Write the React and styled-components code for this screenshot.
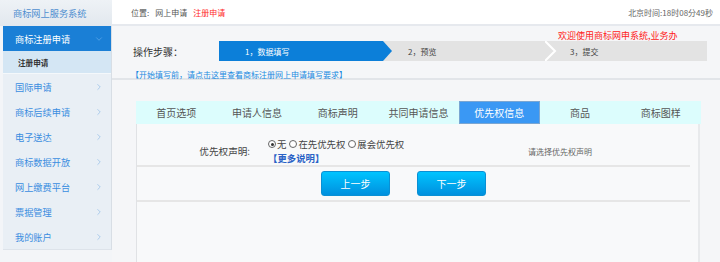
import styled, { createGlobalStyle } from "styled-components";
import { ChevronRight, ChevronDown } from "lucide-react";

const GlobalStyle = createGlobalStyle`
  html, body {
    margin: 0;
    padding: 0;
  }
  body {
    font-family: "Noto Sans CJK SC", "Noto Sans", sans-serif;
    background: #f5f6f8;
  }
`;

const Page = styled.div`
  display: flex;
  width: 720px;
  height: 262px;
  overflow: hidden;
`;

const Sidebar = styled.aside`
  width: 112px;
  flex-shrink: 0;
  display: flex;
  flex-direction: column;
  background: #f3f5f8;
`;

const Brand = styled.div`
  height: 26px;
  display: flex;
  align-items: center;
  padding-left: 13px;
  font-size: 9.2px;
  color: #4f8fd0;
  background: linear-gradient(#eef2f6, #e2e8ee);
`;

const Menu = styled.nav`
  margin-left: 3px;
  background: #e9eff5;
  border-right: 1px solid #d8dee5;
  border-bottom: 1px solid #dde3ea;
`;

const MenuItem = styled.div`
  height: 25px;
  display: flex;
  align-items: center;
  justify-content: space-between;
  padding: 0 7px 0 12px;
  font-size: 9.2px;
  color: ${(p) => (p.$active ? "#ffffff" : "#3a8de0")};
  background: ${(p) => (p.$active ? "#1a7fd6" : "transparent")};

  svg {
    color: ${(p) => (p.$active ? "#6cb0ee" : "#86b6e4")};
  }
`;

const SubItem = styled.div`
  height: 22px;
  display: flex;
  align-items: center;
  padding-left: 15px;
  font-size: 7.6px;
  font-weight: 700;
  color: #333;
  background: #d4e6f4;
  border-bottom: 1px solid #f4f8fb;
`;

const Main = styled.main`
  flex: 1;
  display: flex;
  flex-direction: column;
  min-width: 0;
`;

const TopBar = styled.header`
  height: 24px;
  display: flex;
  align-items: center;
  justify-content: space-between;
  padding: 0 7px 0 19px;
  background: #ffffff;
  border-bottom: 2px solid #e6e9ee;
  font-size: 8px;
  color: #555;
`;

const Crumb = styled.span`
  margin-left: ${(p) => (p.$first ? "0" : "6px")};
  color: ${(p) => (p.$current ? "#ff2a2a" : "#555")};
`;

const Clock = styled.span`
  color: #666;
`;

const StepsSection = styled.section`
  position: relative;
  height: 54px;
  padding: 15px 0 0 19px;
  box-sizing: border-box;
  border-bottom: 2px solid #e2e5e9;
`;

const StepRow = styled.div`
  display: flex;
  align-items: center;
  height: 20px;
`;

const StepLabel = styled.span`
  width: 88px;
  padding-left: 2px;
  box-sizing: border-box;
  font-size: 10px;
  color: #333;
`;

const StepBar = styled.div`
  display: flex;
  width: 488px;
  height: 20px;
  background: #e3e3e3;
`;

const Step = styled.div`
  height: 20px;
  display: flex;
  align-items: center;
  box-sizing: border-box;
  width: ${(p) => p.$w || "auto"};
  flex: ${(p) => (p.$w ? "none" : "1")};
  padding-left: ${(p) => p.$pad}px;
  font-size: 8px;
  color: ${(p) => (p.$active ? "#ffffff" : "#444")};
  background: ${(p) => (p.$active ? "#0c7fd9" : "transparent")};
  clip-path: ${(p) =>
    p.$active
      ? "polygon(0 0, calc(100% - 9px) 0, 100% 50%, calc(100% - 9px) 100%, 0 100%)"
      : "none"};
`;

const Marquee = styled.div`
  position: absolute;
  top: 5px;
  left: 446px;
  white-space: nowrap;
  font-size: 9px;
  line-height: 10px;
  color: #ff2020;
`;

const GuideLink = styled.a`
  display: block;
  margin-top: 9px;
  font-size: 8px;
  line-height: 10px;
  color: #1a8ae0;
  text-decoration: none;
`;

const Panel = styled.section`
  flex: 1;
  display: flex;
  flex-direction: column;
  margin: 21px 19px 0 24px;
`;

const TabRow = styled.div`
  display: grid;
  grid-template-columns: repeat(7, 1fr);
  height: 23px;
  background: #dcfdfd;
`;

const Tab = styled.div`
  display: flex;
  align-items: center;
  justify-content: center;
  box-sizing: border-box;
  font-size: 10px;
  color: ${(p) => (p.$active ? "#ffffff" : "#555")};
  background: ${(p) => (p.$active ? "#3a98f4" : "transparent")};
  border: 1px solid ${(p) => (p.$active ? "#7aa6d2" : "transparent")};
`;

const Content = styled.div`
  flex: 1;
  margin-right: 1px;
  background: #f8f9fa;
  border-left: 1px solid #e0e2e5;
  border-right: 2px solid #e8eaec;
`;

const FormRow = styled.div`
  display: grid;
  grid-template-columns: 118px 273px 1fr;
  align-items: center;
  height: 28px;
  margin: 13px 8px 0 0;
  border-bottom: 2px solid #e6e6e6;
`;

const FieldLabel = styled.div`
  text-align: right;
  padding-right: 5px;
  font-size: 9.6px;
  color: #444;
`;

const FieldValue = styled.div`
  padding-left: 13px;
  font-size: 9.4px;
  line-height: 14px;
  color: #444;
`;

const RadioGroup = styled.div`
  display: flex;
  align-items: center;
  gap: 3px;
`;

const RadioOption = styled.label`
  display: flex;
  align-items: center;
  gap: 1px;
`;

const Radio = styled.span`
  position: relative;
  width: 6px;
  height: 6px;
  border: 1px solid #666;
  border-radius: 50%;
  background: #fff;

  &::after {
    content: "";
    display: ${(p) => (p.$checked ? "block" : "none")};
    position: absolute;
    left: 1.5px;
    top: 1.5px;
    width: 3px;
    height: 3px;
    border-radius: 50%;
    background: #333;
  }
`;

const MoreLink = styled.a`
  display: block;
  font-weight: 700;
  color: #2a62c6;
  text-decoration: none;
`;

const Hint = styled.div`
  font-size: 8px;
  color: #666;
`;

const ButtonRow = styled.div`
  display: flex;
  align-items: center;
  justify-content: center;
  gap: 27px;
  height: 33px;
  padding-right: 20px;
  margin-right: 8px;
  border-bottom: 2px solid #e6e6e6;
`;

const Button = styled.button`
  width: 69px;
  height: 25px;
  border: 1px solid #0a90d4;
  border-radius: 3px;
  background: linear-gradient(#00c4ff, #0090de);
  color: #fff;
  font-family: inherit;
  font-size: 10px;
  padding: 0;
`;

const menu = ["国际申请", "商标后续申请", "电子送达", "商标数据开放", "网上缴费平台", "票据管理", "我的账户"];
const tabs = ["首页选项", "申请人信息", "商标声明", "共同申请信息", "优先权信息", "商品", "商标图样"];
const options = [
  { label: "无", checked: true },
  { label: "在先优先权" },
  { label: "展会优先权" },
];

function Chevron() {
  return (
    <svg width="12" height="20" viewBox="0 0 12 20">
      <polyline points="0,0 10,10 0,20" fill="none" stroke="#ffffff" strokeWidth="2" />
    </svg>
  );
}

export default function App() {
  return (
    <>
      <GlobalStyle />
      <Page>
        <Sidebar>
          <Brand>商标网上服务系统</Brand>
          <Menu>
            <MenuItem $active>
              商标注册申请
              <ChevronDown size={10} strokeWidth={1.5} />
            </MenuItem>
            <SubItem>注册申请</SubItem>
            {menu.map((m) => (
              <MenuItem key={m}>
                {m}
                <ChevronRight size={10} strokeWidth={1.5} />
              </MenuItem>
            ))}
          </Menu>
        </Sidebar>

        <Main>
          <TopBar>
            <div>
              <Crumb $first>位置:</Crumb>
              <Crumb>网上申请</Crumb>
              <Crumb $current>注册申请</Crumb>
            </div>
            <Clock>北京时间:18时08分49秒</Clock>
          </TopBar>

          <StepsSection>
            <Marquee>欢迎使用商标网申系统,业务办</Marquee>
            <StepRow>
              <StepLabel>操作步骤：</StepLabel>
              <StepBar>
                <Step $active $w="173px" $pad={26}>1，数据填写</Step>
                <Step $w="153px" $pad={16}>2，预览</Step>
                <Chevron />
                <Step $pad={13}>3，提交</Step>
              </StepBar>
            </StepRow>
            <GuideLink>【开始填写前，请点击这里查看商标注册网上申请填写要求】</GuideLink>
          </StepsSection>

          <Panel>
            <TabRow>
              {tabs.map((t) => (
                <Tab key={t} $active={t === "优先权信息"}>{t}</Tab>
              ))}
            </TabRow>
            <Content>
              <FormRow>
                <FieldLabel>优先权声明:</FieldLabel>
                <FieldValue>
                  <RadioGroup>
                    {options.map((o) => (
                      <RadioOption key={o.label}>
                        <Radio $checked={o.checked} />
                        {o.label}
                      </RadioOption>
                    ))}
                  </RadioGroup>
                  <MoreLink>【更多说明】</MoreLink>
                </FieldValue>
                <Hint>请选择优先权声明</Hint>
              </FormRow>
              <ButtonRow>
                <Button>上一步</Button>
                <Button>下一步</Button>
              </ButtonRow>
            </Content>
          </Panel>
        </Main>
      </Page>
    </>
  );
}
